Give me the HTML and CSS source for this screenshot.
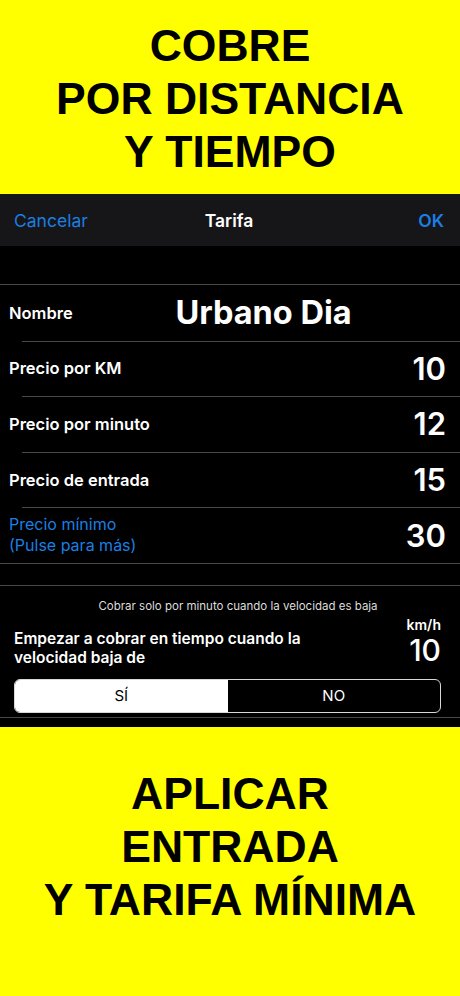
FILE: index.html
```html
<!DOCTYPE html>
<html>
<head>
	<title>Tarifa</title>
	<link rel="stylesheet" href="styles.css">
</head>
<body>
	<header class="promo promo-top">
		<h1>COBRE<br>POR DISTANCIA<br>Y TIEMPO</h1>
	</header>

	<section class="screen">
		<nav class="navbar">
			<span class="nav-link">Cancelar</span>
			<span class="nav-title">Tarifa</span>
			<span class="nav-link nav-ok">OK</span>
		</nav>

		<div class="gap-top"></div>

		<ul class="rows">
			<li class="row row-name">
				<span class="label">Nombre</span>
				<span class="name">Urbano Dia</span>
			</li>
			<li class="row inset">
				<span class="label">Precio por KM</span>
				<span class="value">10</span>
			</li>
			<li class="row inset">
				<span class="label">Precio por minuto</span>
				<span class="value">12</span>
			</li>
			<li class="row inset">
				<span class="label">Precio de entrada</span>
				<span class="value">15</span>
			</li>
			<li class="row inset">
				<span class="label link">Precio mínimo<br>(Pulse para más)</span>
				<span class="value">30</span>
			</li>
		</ul>

		<div class="speed">
			<p class="hint">Cobrar solo por minuto cuando la velocidad es baja</p>
			<div class="speed-row">
				<span class="speed-text">Empezar a cobrar en tiempo cuando la velocidad baja de</span>
				<span class="speed-value">
					<span class="unit">km/h</span>
					<span class="number">10</span>
				</span>
			</div>
			<div class="segmented">
				<span class="segment selected">SÍ</span>
				<span class="segment">NO</span>
			</div>
		</div>
	</section>

	<footer class="promo promo-bottom">
		<h1>APLICAR<br>ENTRADA<br>Y TARIFA MÍNIMA</h1>
	</footer>
</body>
</html>
```

FILE: styles.css
```css
* {
	box-sizing: border-box;
}
body {
	margin: 0;
	width: 460px; height: 996px;
	overflow: hidden;
	background: #000;
	font-family: Inter, "Noto Sans", sans-serif;
	color: #fff;
}

/* yellow banners */
.promo {
	background: #ffff00;
	color: #000;
	text-align: center;
}
.promo h1 {
	margin: 0;
	font-family: "Liberation Sans", Arial, sans-serif;
	font-size: 44.5px; line-height: 53px;
	font-weight: bold;
}
.promo-top {
	height: 194px;
	padding-top: 19px;
}
.promo-bottom {
	height: 269px;
	padding-top: 40px;
}

/* phone screen */
.screen {
	height: 533px;
	background: #000;
}
.navbar {
	display: grid;
	grid-template-columns: 1fr auto 1fr;
	align-items: center;
	height: 52px;
	padding: 0 16px 0 14px;
	background: #161618;
	font-size: 17.5px;
}
.nav-link {
	color: #1b7fe3;
}
.nav-title {
	font-weight: 600;
}
.nav-ok {
	text-align: right;
	font-weight: 600;
}
.gap-top {
	height: 38px;
}

.rows {
	list-style: none;
	margin: 0; padding: 0;
	border-top: 1px solid #48484a;
	border-bottom: 1px solid #48484a;
}
.row {
	display: flex;
	align-items: center;
	justify-content: space-between;
	height: 55.6px;
	padding: 0 14px 0 9px;
}
.row.inset {
	background: linear-gradient(#48484a, #48484a) 22px 0 / calc(100% - 22px) 1px no-repeat;
}
.label {
	font-size: 16.5px; font-weight: 600;
}
.label.link {
	color: #1b7fe3;
	font-size: 16px;
	font-weight: 400;
	line-height: 21px;
}
.value {
	font-size: 31px; font-weight: 600;
}
.row-name .label {
	width: 72px;
}
.row-name .name {
	flex: 1;
	text-align: center;
	font-size: 32.5px; font-weight: 700;
}

.speed {
	margin-top: 21px;
	border-top: 1px solid #48484a;
	border-bottom: 1px solid #48484a;
	padding: 13px 19px 4px 14px;
}
.hint {
	margin: 0 0 0 21px;
	text-align: center;
	font-size: 11.5px; line-height: 14px;
	color: #ddd;
}
.speed-row {
	display: flex;
	justify-content: space-between;
	align-items: flex-end;
	margin-top: 4px;
}
.speed-text {
	width: 300px;
	font-size: 15.5px; line-height: 19px;
	font-weight: 600;
}
.speed-value {
	display: flex;
	flex-direction: column;
	align-items: flex-end;
}
.unit {
	font-size: 14px; font-weight: 600;
	line-height: 16px;
}
.number {
	font-size: 30px; line-height: 34px;
	font-weight: 500;
}
.segmented {
	display: flex;
	height: 34px;
	margin-top: 12px;
	border: 1px solid #d8d8d8;
	border-radius: 6px;
	overflow: hidden;
}
.segment {
	flex: 1;
	display: flex;
	align-items: center;
	justify-content: center;
	font-size: 15px;
}
.segment.selected {
	background: #fff;
	color: #000;
}
```
